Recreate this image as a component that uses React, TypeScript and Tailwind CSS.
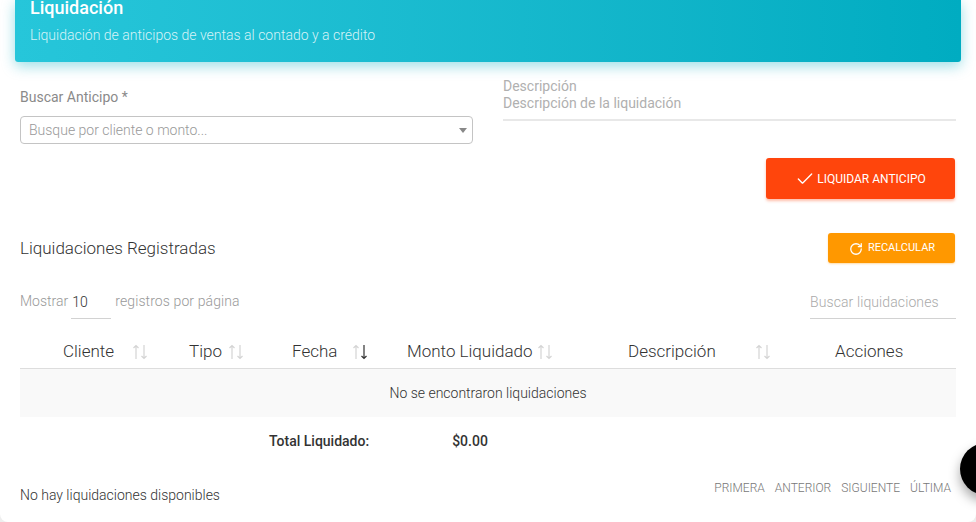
import { Check, RotateCw } from "lucide-react";

const columns = [
  { label: "Cliente", cell: "w-[169px] pl-[43px]", gap: "ml-[18px]", active: false },
  { label: "Tipo", cell: "w-[103px]", gap: "ml-[6px]", active: false },
  { label: "Fecha", cell: "w-[115px]", gap: "ml-[15px]", active: true },
  { label: "Monto Liquidado", cell: "w-[221px]", gap: "ml-[4px]", active: false },
  { label: "Descripción", cell: "w-[207px]", gap: "ml-[39px]", active: false },
  { label: "Acciones", cell: "", gap: "", active: false, noSort: true },
];

const pages = ["PRIMERA", "ANTERIOR", "SIGUIENTE", "ÚLTIMA"];

function SortArrows({ active }: { active: boolean }) {
  return (
    <svg width="16" height="16" viewBox="0 0 16 16" fill="none" strokeWidth="1.2" className="shrink-0">
      <path d="M4 15V1.5M1.5 4L4 1.5 6.5 4" stroke="#d4d4d4" />
      <path d="M12 1v13.5M9.5 12l2.5 2.5 2.5-2.5" stroke={active ? "#333333" : "#d4d4d4"} />
    </svg>
  );
}

export default function App() {
  return (
    <div className="relative h-[522px] w-[976px] overflow-hidden bg-[#eeeeee] font-['Roboto',sans-serif]">
      <div className="h-full rounded-b-[8px] bg-white">
        <header className="mx-[15px] flex h-[62px] flex-col rounded-b-[3px] bg-gradient-to-r from-[#26c6da] to-[#00acc1] pl-[15px] shadow-[0_4px_14px_rgba(0,172,193,0.4)]">
          <h1 className="text-[18px] leading-[16px] font-medium text-white">Liquidación</h1>
          <p className="mt-[10px] text-[14px] leading-[18px] font-light text-[#d5f3f7]">
            Liquidación de anticipos de ventas al contado y a crédito
          </p>
        </header>

        <div className="px-[20px]">
          <div className="grid grid-cols-2 gap-x-[30px]">
            <div className="pt-[27px]">
              <label className="block text-[14px] leading-[16px] text-[#8a8a8a]">Buscar Anticipo *</label>
              <div className="mt-[11px] flex h-[28px] items-center justify-between rounded-[4px] border border-[#c4c4c4] pr-[5px] pl-[8px]">
                <span className="text-[14px] font-light text-[#999999]">Busque por cliente o monto...</span>
                <span className="h-0 w-0 border-x-[4px] border-t-[5px] border-x-transparent border-t-[#888888]" />
              </div>
            </div>
            <div className="pt-[16px]">
              <div className="text-[14px] leading-[17px] text-[#b0b0b0]">Descripción</div>
              <div className="border-b-2 border-[#e8e8e8] pb-[7px] text-[14px] leading-[17px] text-[#b0b0b0]">
                Descripción de la liquidación
              </div>
            </div>
          </div>

          <div className="mt-[14px] flex justify-end pr-px">
            <button className="flex h-[41px] w-[189px] items-center justify-center gap-[2px] rounded-[3px] bg-[#ff450c] pt-px text-[12px] text-white shadow-[0_2px_3px_rgba(255,69,12,0.35)]">
              <Check size={20} strokeWidth={1.6} />
              LIQUIDAR ANTICIPO
            </button>
          </div>

          <div className="mt-[34px] flex items-center justify-between pr-px">
            <h2 className="pt-px text-[17px] font-light text-[#333333]">Liquidaciones Registradas</h2>
            <button className="flex h-[30px] w-[127px] items-center justify-center gap-[5px] rounded-[3px] bg-[#ff9800] pt-px pl-px text-[11px] text-white shadow-[0_1px_2px_rgba(255,152,0,0.35)]">
              <RotateCw size={14} strokeWidth={2.2} />
              RECALCULAR
            </button>
          </div>

          <div className="mt-[24px] flex items-start justify-between">
            <div className="flex text-[14px] font-light text-[#999999]">
              <span className="leading-[28px]">Mostrar</span>
              <span className="ml-[3px] h-[32px] w-[40px] border-b border-[#d2d2d2] pl-px leading-[30px] text-[#333333]">10</span>
              <span className="ml-[4px] leading-[28px] tracking-[0.1px]">registros por página</span>
            </div>
            <div className="h-[32px] w-[146px] border-b border-[#d2d2d2] text-[14px] leading-[30px] font-light tracking-[0.1px] text-[#aaaaaa]">
              Buscar liquidaciones
            </div>
          </div>

          <div className="mt-[13px] flex h-[37px] items-center border-b border-[#dddddd] pt-[4px] text-[17px] font-light text-[#333333]">
            {columns.map((c) => (
              <div key={c.label} className={`flex items-center ${c.cell}`}>
                <span>{c.label}</span>
                {!c.noSort && (
                  <span className={c.gap}>
                    <SortArrows active={c.active} />
                  </span>
                )}
              </div>
            ))}
          </div>
          <div className="flex h-[48px] items-center justify-center bg-[#f9f9f9] text-[14px] font-light text-[#333333]">
            No se encontraron liquidaciones
          </div>
          <div className="flex h-[48px] items-center text-[14px] font-medium text-[#333333]">
            <span className="ml-[249px]">Total Liquidado:</span>
            <span className="ml-[83px]">$0.00</span>
          </div>

          <div className="flex items-start justify-between pr-[5px]">
            <span className="mt-[20px] text-[14px] leading-[20px] font-light text-[#333333]">No hay liquidaciones disponibles</span>
            <div className="mt-[16px] flex gap-[10px] text-[12px] leading-[14px] font-light text-[#777777]">
              {pages.map((p) => (
                <span key={p}>{p}</span>
              ))}
            </div>
          </div>
        </div>
      </div>

      <div className="absolute top-[443px] left-[960px] h-[52px] w-[52px] rounded-full bg-black shadow-[0_6px_12px_rgba(0,0,0,0.35)]" />
    </div>
  );
}
